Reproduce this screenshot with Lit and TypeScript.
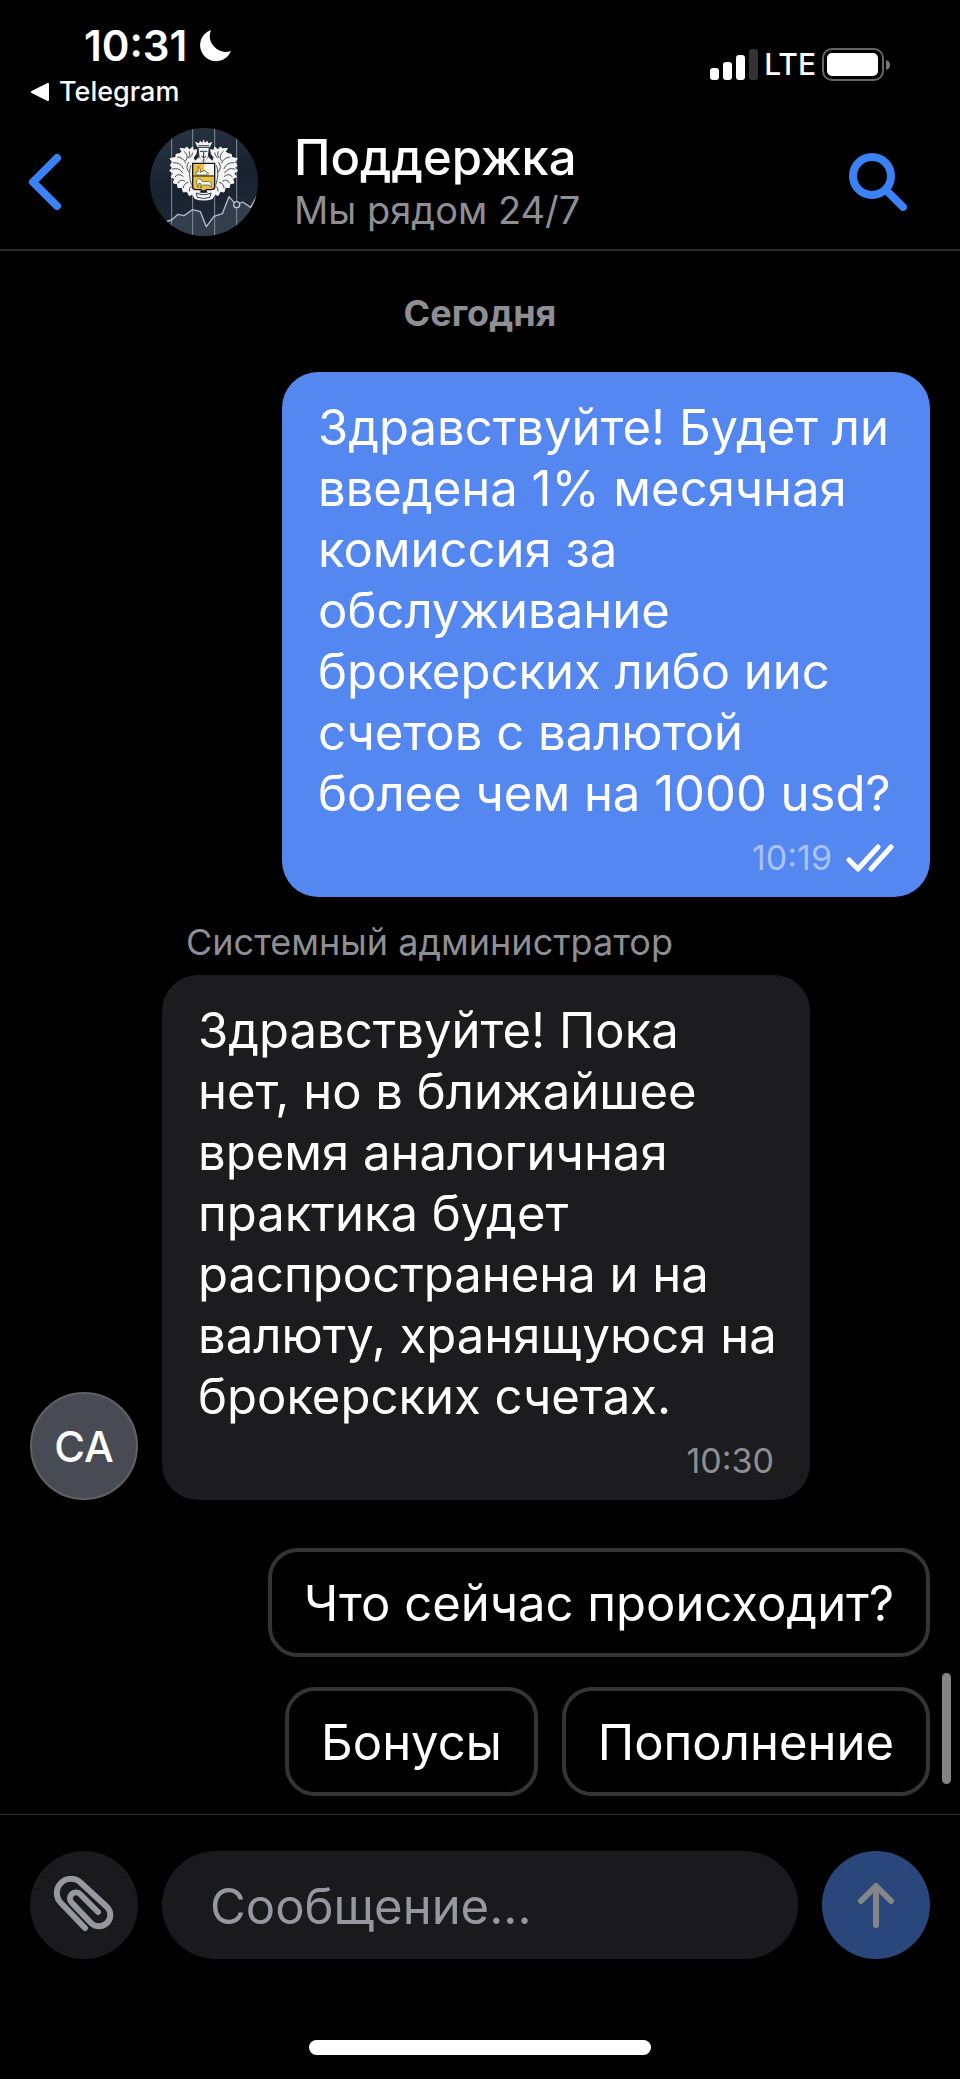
import {css, html, svg, LitElement} from 'lit';
import {customElement, property} from 'lit/decorators.js';
import {classMap} from 'lit/directives/class-map.js';

interface Message {
  text: string;
  time: string;
  author?: string;
  initials?: string;
}

const MESSAGES: Message[] = [
  {
    text: 'Здравствуйте! Будет ли введена 1% месячная комиссия за обслуживание брокерских либо иис счетов с валютой более чем на 1000 usd?',
    time: '10:19',
  },
  {
    text: 'Здравствуйте! Пока нет, но в ближайшее время аналогичная практика будет распространена и на валюту, хранящуюся на брокерских счетах.',
    time: '10:30',
    author: 'Системный администратор',
    initials: 'СА',
  },
];

const SUGGESTIONS = ['Что сейчас происходит?', 'Бонусы', 'Пополнение'];

// one half of the crest's foliage, mirrored for the other side
const foliage = svg`
  <path d="M166 132 L160 116 L168 104 L170 92 L160 94 L158 84 L149 92 L140 84 L134 90 L120 88 L126 98
    L118 104 L108 106 L108 115 L90 119 L98 129 L91 139 L98 147 L89 155 L100 163 L93 174 L104 179
    L100 192 L112 194 L114 206 L126 205 L130 219 L141 217 L148 230 L158 225 L168 232 L182 214 L160 204 Z"
    fill="#f6f6f4" stroke="#f6f6f4" stroke-width="3" stroke-linejoin="round" />
  <path d="M132 97 q16 12 6 28 M113 114 q18 2 24 18 M100 131 q22 -2 30 18 M98 150 q20 -6 30 12
    M105 174 q8 -14 24 -2 M114 192 q6 -14 20 -6 M130 206 q0 -12 14 -16 M148 216 q-2 -10 8 -16
    M146 130 q-12 16 2 30 M152 140 q-8 26 2 56 M148 98 q4 10 -2 18 M158 102 q-2 10 -8 14"
    fill="none" stroke="#4a515c" stroke-width="3" stroke-linecap="round" />
`;

@customElement('chat-avatar')
export class ChatAvatarElement extends LitElement {
  static styles = css`
    :host {
      display: block;
      width: 108px;
      height: 108px;
      border-radius: 50%;
      overflow: hidden;
    }
    svg {
      display: block;
      width: 100%;
      height: 100%;
    }
  `;

  render() {
    return html`
      <svg viewBox="30 27 324 324" role="img" aria-label="Поддержка">
        <defs>
          <linearGradient id="sky" x1="0" y1="0" x2="0.3" y2="1">
            <stop offset="0" stop-color="#2b3544" />
            <stop offset="0.6" stop-color="#182130" />
            <stop offset="1" stop-color="#1f2937" />
          </linearGradient>
        </defs>
        <rect x="30" y="27" width="324" height="324" fill="url(#sky)" />
        <path
          d="M80 307 L95 303 L114 286 L132 290 L157 272 L181 278 L199 323 L222 292 L247 284 L267 233 L282 250 L290 257 L308 249 L332 265 L354 225 V351 H30 Z"
          fill="#333e4c"
        />
        <path
          d="M95 27 V351 M158 27 V351 M224 27 V351 M290 27 V351"
          stroke="#858d98"
          stroke-width="3"
        />
        <path
          d="M80 307 L95 303 L114 286 L132 290 L157 272 L181 278 L199 323 L222 292 L247 284 L267 233 L282 250 L290 257 L308 249 L332 265 L354 225"
          fill="none"
          stroke="#b9bec6"
          stroke-width="4"
          stroke-linejoin="round"
        />
        <circle cx="290" cy="257" r="9" fill="#2a3442" stroke="#c3c8cf" stroke-width="4" />
        ${foliage}
        <g transform="translate(382 0) scale(-1 1)">${foliage}</g>
        <path
          d="M155 222 L168 217 Q191 227 214 217 L227 222 L218 240 Q191 249 164 240 Z"
          fill="#f6f6f4"
        />
        <path d="M169 222 Q191 232 213 222 L210 235 Q191 242 172 235 Z" fill="none" stroke="#343c48" stroke-width="3" />
        <path
          d="M172 84 L165 68 L177 73 L180 65 L187 71 L191 61 L195 71 L202 65 L205 73 L217 68 L210 84 Z"
          fill="#f6f6f4"
        />
        <path d="M175 80 H207" stroke="#343c48" stroke-width="3" />
        <path d="M174 85 H208 L205 113 Q202 123 191 132 Q180 123 177 113 Z" fill="#f6f6f4" stroke="#29313d" stroke-width="3" />
        <path d="M180 97 H189 M193 97 H202 M191 95 V117 M184 111 L191 117 L198 111" fill="none" stroke="#29313d" stroke-width="3" />
        <path d="M177 114 L155 134 H227 L205 114 L191 132 Z" fill="#f6f6f4" />
        <path d="M188 119 L191 132 L194 119 Z" fill="#b0413c" />
        <path
          d="M158 133 H224 V204 Q224 212 214 212 H200 L191 217 L182 212 H168 Q158 212 158 204 Z"
          fill="#eac23f"
          stroke="#10161f"
          stroke-width="4"
        />
        <path d="M193 135 H222 V168 H208 L193 151 Z" fill="#f6f6f4" />
        <path d="M160 171 H222" stroke="#10161f" stroke-width="3" />
        <path
          d="M168 164 Q166 156 175 158 L174 142 L182 152 L180 160 L193 155 L206 163 L198 168 H174 Z"
          fill="#f6f6f4"
          stroke="#4b4630"
          stroke-width="2"
        />
        <path
          d="M169 187 L176 178 L184 182 L188 188 L206 187 L214 191 L213 205 L207 198 L189 198 L181 208 L184 195 L177 192 L174 205 L171 197 Z"
          fill="#f6f6f4"
          stroke="#4b4630"
          stroke-width="2"
        />
      </svg>
    `;
  }
}

@customElement('chat-message')
export class ChatMessageElement extends LitElement {
  static styles = css`
    :host {
      display: block;
    }
    .author {
      margin: 0 0 12px 156px;
      font-size: 36px;
      line-height: 42px;
      color: #8e8e93;
    }
    .row {
      display: flex;
      align-items: flex-end;
      gap: 24px;
    }
    .row.own {
      justify-content: flex-end;
    }
    .initials {
      display: flex;
      flex: none;
      align-items: center;
      justify-content: center;
      box-sizing: border-box;
      width: 108px;
      height: 108px;
      border: 2px solid #616165;
      border-radius: 50%;
      background: #484b53;
      font-size: 42px;
      font-weight: 500;
    }
    .bubble {
      box-sizing: border-box;
      width: 72%;
      padding: 25px 32px 18px 36px;
      border-radius: 36px;
      background: #1c1c1e;
    }
    .own .bubble {
      background: #5488f0;
    }
    .text {
      margin: 0;
      font-size: 49px;
      line-height: 61px;
    }
    .meta {
      display: flex;
      align-items: center;
      justify-content: flex-end;
      gap: 14px;
      margin-top: 13px;
      padding-right: 4px;
      font-size: 34px;
      line-height: 42px;
      color: #8e8e93;
    }
    .own .meta {
      color: #a9c3f7;
    }
    .ticks {
      width: 48px;
      height: 28px;
    }
  `;

  @property({attribute: false}) message!: Message;

  render() {
    const {text, time, author, initials} = this.message;
    return html`
      ${author ? html`<div class="author">${author}</div>` : ''}
      <div class=${classMap({row: true, own: !author})}>
        ${initials ? html`<div class="initials">${initials}</div>` : ''}
        <div class="bubble">
          <p class="text">${text}</p>
          <div class="meta">
            <time>${time}</time>
            ${author
              ? ''
              : html`<svg class="ticks" viewBox="0 0 48 28" aria-hidden="true">
                  <path
                    d="M3 16 L12 25 L32 3 M25 25 L45 3"
                    fill="none"
                    stroke="#fff"
                    stroke-width="5"
                    stroke-linecap="round"
                    stroke-linejoin="round"
                  />
                </svg>`}
          </div>
        </div>
      </div>
    `;
  }
}

@customElement('app-root')
export class AppRootElement extends LitElement {
  static styles = css`
    :host {
      display: flex;
      flex-direction: column;
      min-height: 100vh;
      background: #000;
      color: #fff;
      font-family: Inter, 'Liberation Sans', sans-serif;
    }
    button {
      margin: 0;
      padding: 0;
      border: 0;
      background: none;
      color: inherit;
      font: inherit;
    }
    svg {
      display: block;
    }

    .status {
      display: flex;
      justify-content: space-between;
      padding: 20px 70px 0 30px;
    }
    .clock {
      display: flex;
      align-items: center;
      gap: 12px;
      padding-left: 54px;
      font-size: 42px;
      font-weight: 600;
      line-height: 52px;
    }
    .return {
      display: flex;
      align-items: center;
      gap: 9px;
      color: inherit;
      font-size: 27px;
      font-weight: 500;
      line-height: 40px;
      text-decoration: none;
    }
    .signals {
      display: flex;
      align-items: center;
      gap: 6px;
      height: 48px;
      padding-top: 20px;
      font-size: 30px;
      font-weight: 500;
    }

    .header {
      display: flex;
      align-items: center;
      height: 135px;
      border-bottom: 2px solid #2c2c2e;
      padding: 2px 53px 0 28px;
    }
    .back {
      width: 122px;
    }
    .title {
      flex: 1;
      padding-left: 36px;
    }
    .title h1 {
      margin: 0;
      font-size: 49px;
      font-weight: 500;
      line-height: 56px;
    }
    .title p {
      margin: 0;
      font-size: 38px;
      line-height: 48px;
      color: #8e8e93;
    }

    .chat {
      position: relative;
      flex: 1;
      padding: 40px 30px 18px;
    }
    .day {
      margin: 0 0 37px;
      font-size: 36px;
      font-weight: 700;
      line-height: 44px;
      text-align: center;
      color: #8e8e93;
    }
    .messages {
      display: flex;
      flex-direction: column;
      gap: 24px;
    }
    .suggestions {
      display: flex;
      flex-wrap: wrap;
      justify-content: flex-end;
      gap: 30px 24px;
      padding: 48px 0 0 200px;
    }
    .suggestions button {
      box-sizing: border-box;
      height: 109px;
      padding: 2px 32px 0;
      border: 4px solid #343434;
      border-radius: 30px;
      font-size: 49px;
    }
    .scrollbar {
      position: absolute;
      right: 9px;
      bottom: 30px;
      width: 9px;
      height: 111px;
      border-radius: 5px;
      background: #848484;
    }

    .composer {
      display: flex;
      gap: 24px;
      padding: 36px 30px 0;
      border-top: 1px solid #2c2c2e;
    }
    .composer button {
      display: flex;
      flex: none;
      align-items: center;
      justify-content: center;
      width: 108px;
      height: 108px;
      border-radius: 50%;
      background: #1a1a1c;
    }
    .composer .send {
      background: #2a477c;
    }
    .composer input {
      flex: 1;
      box-sizing: border-box;
      min-width: 0;
      height: 108px;
      padding: 2px 48px 0;
      border: 0;
      border-radius: 54px;
      outline: none;
      background: #1a1a1c;
      color: #fff;
      font: inherit;
      font-size: 49px;
    }
    .composer input::placeholder {
      color: #96979f;
      opacity: 1;
    }
    .home {
      width: 342px;
      height: 15px;
      margin: 81px auto 24px;
      border-radius: 8px;
      background: #fff;
    }
  `;

  private renderStatus() {
    return html`
      <div class="status">
        <div>
          <div class="clock">
            <time>10:31</time>
            <svg width="32" height="32" viewBox="0 0 32 32" aria-hidden="true">
              <path d="M12 0 A16 16 0 1 0 32 21 A16 16 0 0 1 12 0 Z" fill="#fff" />
            </svg>
          </div>
          <a class="return" href="#">
            <svg width="20" height="18" viewBox="0 0 20 18" aria-hidden="true">
              <path d="M2 9 L18 1 V17 Z" fill="#fff" stroke="#fff" stroke-width="2" stroke-linejoin="round" />
            </svg>
            Telegram
          </a>
        </div>
        <div class="signals">
          <svg width="48" height="31" viewBox="0 0 48 31" aria-hidden="true">
            <rect y="19" width="9" height="12" rx="3" fill="#fff" />
            <rect x="13" y="13" width="9" height="18" rx="3" fill="#fff" />
            <rect x="26" y="6" width="9" height="25" rx="3" fill="#fff" />
            <rect x="39" width="9" height="31" rx="3" fill="#333" />
          </svg>
          <span>LTE</span>
          <svg width="68" height="33" viewBox="0 0 68 33" aria-hidden="true">
            <rect x="1" y="1" width="60" height="31" rx="9" fill="none" stroke="#666" stroke-width="2" />
            <rect x="5" y="5" width="51" height="23" rx="5" fill="#fff" />
            <path d="M64 12 q4 1 4 5 t-4 5 Z" fill="#777" />
          </svg>
        </div>
      </div>
    `;
  }

  private renderHeader() {
    return html`
      <header class="header">
        <button class="back" aria-label="Назад">
          <svg width="34" height="58" viewBox="0 0 34 58">
            <path
              d="M29 5 L5 29 L29 53"
              fill="none"
              stroke="#3b82f7"
              stroke-width="8"
              stroke-linecap="round"
              stroke-linejoin="round"
            />
          </svg>
        </button>
        <chat-avatar></chat-avatar>
        <div class="title">
          <h1>Поддержка</h1>
          <p>Мы рядом 24/7</p>
        </div>
        <button aria-label="Поиск">
          <svg width="58" height="58" viewBox="0 0 58 58">
            <circle cx="23" cy="23" r="19" fill="none" stroke="#3b82f7" stroke-width="8" />
            <path d="M37 37 L54 54" stroke="#3b82f7" stroke-width="8" stroke-linecap="round" />
          </svg>
        </button>
      </header>
    `;
  }

  private renderComposer() {
    return html`
      <form class="composer" @submit=${(e: Event) => e.preventDefault()}>
        <button type="button" aria-label="Прикрепить файл">
          <svg width="62" height="58" viewBox="0 0 62 58">
            <path
              d="M32 52 L8 27 A14 14 0 0 1 28 7 L54 31 A11 11 0 0 1 38 47 L19 27 A6 6 0 0 1 27 18 L45 36"
              fill="none"
              stroke="#96979f"
              stroke-width="6"
              stroke-linecap="round"
              stroke-linejoin="round"
            />
          </svg>
        </button>
        <input type="text" placeholder="Сообщение..." aria-label="Сообщение" />
        <button class="send" aria-label="Отправить">
          <svg width="38" height="46" viewBox="0 0 38 46">
            <path
              d="M19 43 V4 M4 19 L19 4 L34 19"
              fill="none"
              stroke="#858488"
              stroke-width="6"
              stroke-linecap="round"
              stroke-linejoin="round"
            />
          </svg>
        </button>
      </form>
    `;
  }

  render() {
    return html`
      ${this.renderStatus()} ${this.renderHeader()}
      <main class="chat">
        <h2 class="day">Сегодня</h2>
        <div class="messages">
          ${MESSAGES.map((m) => html`<chat-message .message=${m}></chat-message>`)}
        </div>
        <div class="suggestions">
          ${SUGGESTIONS.map((s) => html`<button>${s}</button>`)}
        </div>
        <div class="scrollbar"></div>
      </main>
      ${this.renderComposer()}
      <div class="home"></div>
    `;
  }
}
